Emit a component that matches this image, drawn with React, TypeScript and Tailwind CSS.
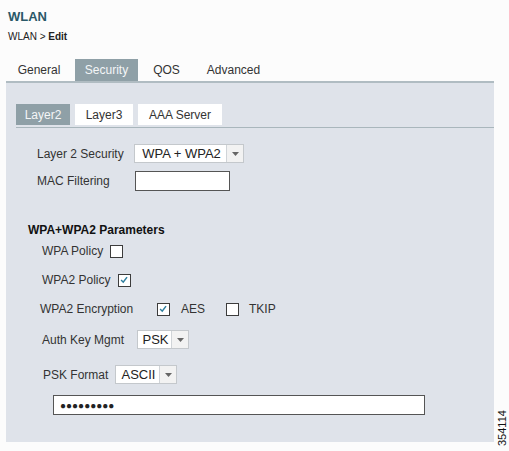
import React from "react";

function Checkbox({ checked }: { checked?: boolean }) {
  return (
    <span className="relative inline-block w-[13px] h-[13px] border border-[#3c3c3c] bg-white">
      {checked && (
        <svg viewBox="0 0 13 13" className="absolute inset-0 w-[11px] h-[11px]">
          <path d="M2.5 6 L5 8.5 L9.5 2.5" fill="none" stroke="#2f7f9f" strokeWidth="1.8" />
        </svg>
      )}
    </span>
  );
}

function Select({ value, w }: { value: string; w: string }) {
  return (
    <div className={`flex h-[19px] border border-[#c4c8cc] bg-white ${w}`}>
      <div className="flex-1 flex items-center justify-center text-[13px] text-[#222] pl-[2px]">{value}</div>
      <div className="w-[17px] border-l border-[#d0d4d8] bg-[#f2f2f2] flex items-center justify-center">
        <svg viewBox="0 0 7 4" className="w-[7px] h-[4px]">
          <path d="M0 0 L7 0 L3.5 4 Z" fill="#666" />
        </svg>
      </div>
    </div>
  );
}

export default function App() {
  return (
    <div className="relative w-[509px] h-[451px] bg-[#fcfcfc] text-[#333] font-['Liberation_Sans',Arial,sans-serif] overflow-hidden">
      <div className="pl-[8px] pt-[9px] text-[13px] font-bold text-[#2a5868] leading-[16px]">WLAN</div>
      <div className="pl-[8px] mt-[5px] text-[10px] leading-[14px] text-[#222]">
        WLAN &gt; <span className="font-bold">Edit</span>
      </div>
      <div className="flex mt-[15px] pl-[8px] h-[22px] text-[12px]">
        <div className="w-[62px] flex items-center justify-center text-[#333]">General</div>
        <div className="ml-[5px] w-[63px] flex items-center justify-center bg-[#8fa0a7] text-[#f4f6f7]">Security</div>
        <div className="ml-[5px] w-[47px] flex items-center justify-center text-[#333]">QOS</div>
        <div className="ml-[5px] w-[77px] flex items-center justify-center text-[#333]">Advanced</div>
      </div>
      <div className="ml-[6px] w-[488px] h-[361px] border-t-2 border-[#b0bcc2] bg-[#dfe3ea] pt-[21px]">
        <div className="ml-[10px] flex h-[21px] text-[12px]">
          <div className="w-[54px] flex items-center justify-center bg-[#8fa0a7] text-[#f4f6f7]">Layer2</div>
          <div className="ml-[5px] w-[58px] flex items-center justify-center bg-white text-[#333]">Layer3</div>
          <div className="ml-[5px] w-[84px] flex items-center justify-center bg-white text-[#333]">AAA Server</div>
        </div>
        <div className="ml-[10px] mt-[2px] border-t border-[#a9b6bc]" />
        <div className="text-[12px] text-[#333]">
          <div className="mt-[16px] ml-[31px] flex items-center h-[19px]">
            <span className="w-[97px]">Layer 2 Security</span>
            <Select value="WPA + WPA2" w="w-[110px]" />
          </div>
          <div className="mt-[8px] ml-[31px] flex items-center h-[20px]">
            <span className="w-[98px]">MAC Filtering</span>
            <div className="w-[95px] h-[20px] border border-[#555] bg-white" />
          </div>
          <div className="mt-[32px] ml-[22px] h-[14px] flex items-center font-bold text-[12px] text-[#111]">WPA+WPA2 Parameters</div>
          <div className="mt-[4px] ml-[36px] flex items-center h-[20px]">
            <span className="w-[68px]">WPA Policy</span>
            <Checkbox />
          </div>
          <div className="mt-[9px] ml-[36px] flex items-center h-[20px]">
            <span className="w-[76px]">WPA2 Policy</span>
            <Checkbox checked />
          </div>
          <div className="mt-[9px] ml-[34px] flex items-center h-[20px]">
            <span className="w-[117px]">WPA2 Encryption</span>
            <Checkbox checked />
            <span className="ml-[11px] w-[45px]">AES</span>
            <Checkbox />
            <span className="ml-[10px]">TKIP</span>
          </div>
          <div className="mt-[11px] ml-[36px] flex items-center h-[19px]">
            <span className="w-[95px]">Auth Key Mgmt</span>
            <Select value="PSK" w="w-[52px]" />
          </div>
          <div className="mt-[16px] ml-[37px] flex items-center h-[19px]">
            <span className="w-[72px]">PSK Format</span>
            <Select value="ASCII" w="w-[62px]" />
          </div>
          <div className="mt-[11px] ml-[47px] w-[372px] h-[20px] border border-[#555] bg-white flex items-center pl-[6px] text-[10px] text-[#222]">
            ●●●●●●●●●
          </div>
        </div>
      </div>
      <div className="absolute left-[496px] top-[404px] h-[42px] text-[11px] leading-[12px] text-[#111] [writing-mode:vertical-rl] rotate-180">
        354114
      </div>
    </div>
  );
}
